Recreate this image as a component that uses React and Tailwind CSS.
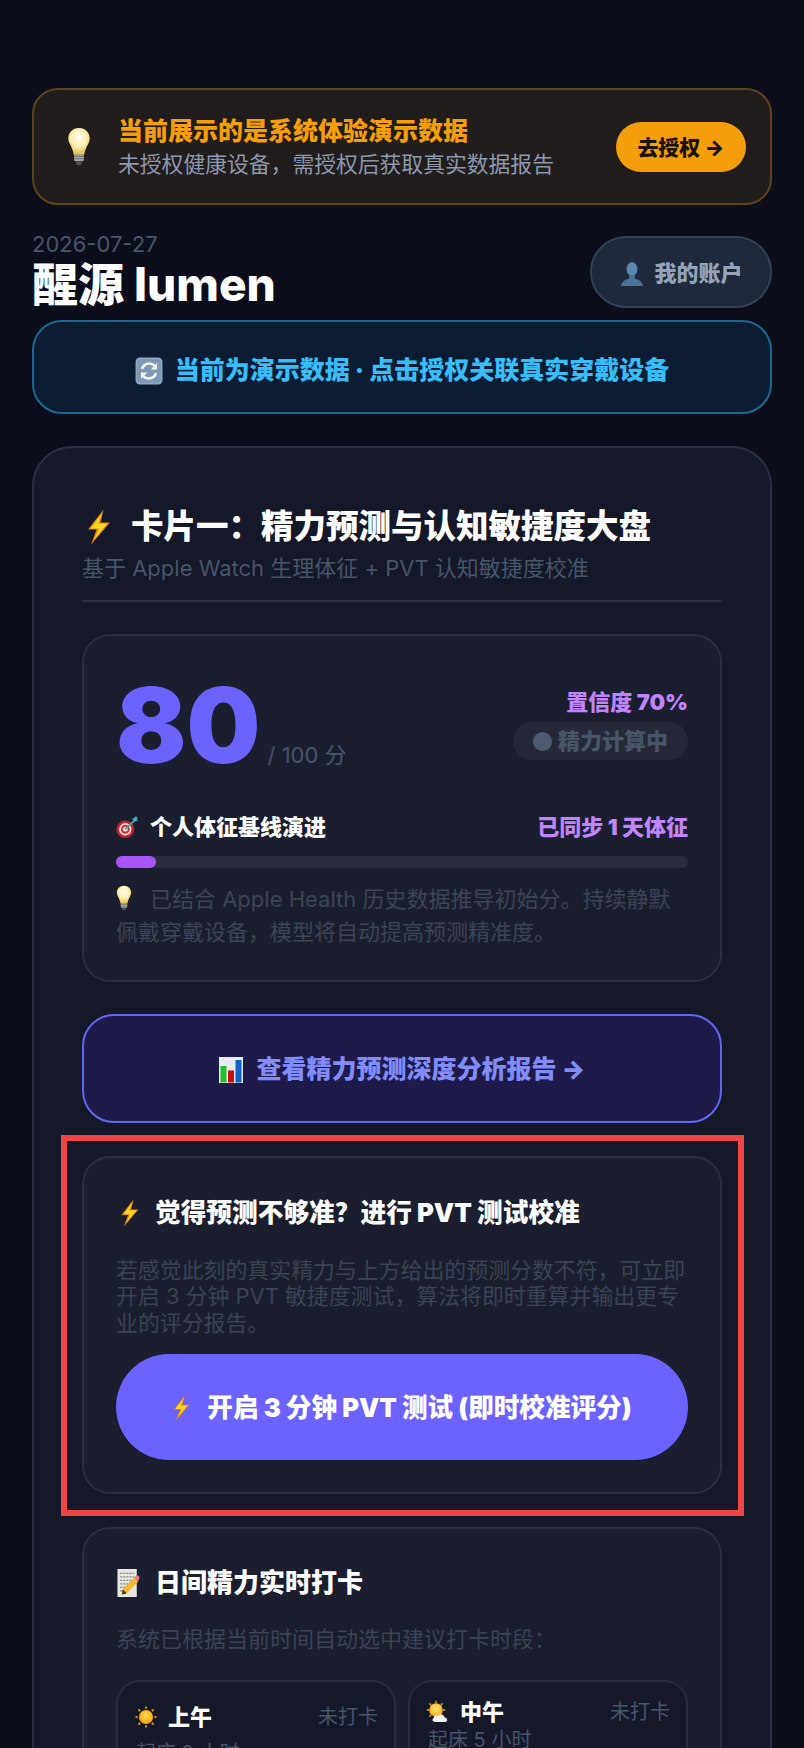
import React from 'react'

const Bulb = ({ className }) => (
  <svg viewBox="0 0 24 40" className={className}>
    <defs>
      <radialGradient id="bulbGlow" cx="50%" cy="35%" r="60%">
        <stop offset="0%" stopColor="#fffdf0" />
        <stop offset="60%" stopColor="#fff0b0" />
        <stop offset="100%" stopColor="#e8c25a" />
      </radialGradient>
    </defs>
    <path d="M12 1C5.5 1 1 5.8 1 11.5c0 5.5 4.6 9 5.6 17h10.8c1-8 5.6-11.5 5.6-17C23 5.8 18.5 1 12 1z" fill="url(#bulbGlow)" />
    <rect x="7" y="28" width="10" height="7" rx="1.5" fill="#a8a8a4" />
    <path d="M7 30h10M7 32.5h10" stroke="#6f6f6c" strokeWidth="1" />
    <rect x="9" y="35" width="6" height="4" rx="2" fill="#55534f" />
  </svg>
)

const Person = ({ className }) => (
  <svg viewBox="0 0 24 24" className={className}>
    <ellipse cx="12" cy="7.5" rx="5" ry="6.5" fill="#5c86ad" />
    <path d="M9.5 13h5l.5 3.5c3.5.8 6.5 2 7 6.5H2c.5-4.500 3.500-5.700 7-6.500z" fill="#4a7299" />
  </svg>
)

const Refresh = ({ className }) => (
  <svg viewBox="0 0 26 26" className={className}>
    <rect x="0.500" y="0.500" width="25" height="25" rx="4" fill="#8fa6bd" />
    <rect x="2" y="2" width="22" height="22" rx="3" fill="#7d99b5" />
    <path d="M6.500 11A7 7 0 0 1 18.500 8.500" fill="none" stroke="#f2f5f8" strokeWidth="2.400" />
    <path d="M20.500 5.500v6h-6z" fill="#f2f5f8" />
    <path d="M19.500 15A7 7 0 0 1 7.500 17.500" fill="none" stroke="#f2f5f8" strokeWidth="2.400" />
    <path d="M5.500 20.500v-6h6z" fill="#f2f5f8" />
  </svg>
)

const Bolt = ({ className }) => (
  <svg viewBox="0 0 24 36" className={className}>
    <path d="M16.500 0.500L1 20.500h8.500L4 35.500 23 13.500h-9.500z" fill="#e08600" />
    <path d="M15.500 3.500L3.500 19.500h8.500L7 31 20.500 14.500h-9.500z" fill="#ffd426" />
  </svg>
)

const Target = ({ className }) => (
  <svg viewBox="0 0 26 26" className={className}>
    <circle cx="10.500" cy="15" r="10" fill="#c9202b" />
    <circle cx="10.500" cy="15" r="7" fill="#f6e4e0" />
    <circle cx="10.500" cy="15" r="5" fill="#d22c33" />
    <circle cx="10.500" cy="15" r="2.800" fill="#f6e4e0" />
    <path d="M10.500 15L21 5" stroke="#3fa9b5" strokeWidth="2" />
    <path d="M18 3l3 3 4-1-1.500-1.500L24.500 1l-3-.5-1 2z" fill="#42b4c4" />
  </svg>
)

const Chart = ({ className }) => (
  <svg viewBox="0 0 24 26" className={className}>
    <rect width="24" height="26" fill="#e6ebf1" />
    <rect x="1.500" y="9" width="6" height="16.500" fill="#1fc22c" />
    <rect x="9" y="13.500" width="6" height="12" fill="#c80f0f" />
    <rect x="16.500" y="3" width="6" height="22.500" fill="#0f62c4" />
  </svg>
)

const Memo = ({ className }) => (
  <svg viewBox="0 0 24 32" className={className}>
    <rect width="22" height="32" fill="#e9e7e2" />
    <path d="M3 5h16M3 9h16M3 13h16M3 17h10M3 21h7M3 25h5" stroke="#8e8c88" strokeWidth="1.300" strokeDasharray="2.500 1" />
    <path d="M6 23L19 10l4.500 4.500L10.500 28 5 29z" fill="#f5b82e" />
    <path d="M19 10l2-2c1-1 2-1 3 0l.5.500c.8.800.8 2 0 3l-1 3z" fill="#e9798a" />
    <path d="M5 29l1-6 4.500 5z" fill="#3d3a36" />
  </svg>
)

const sunRays = [0, 45, 90, 135, 180, 225, 270, 315]

const Sun = ({ className }) => (
  <svg viewBox="0 0 24 24" className={className}>
    <defs>
      <radialGradient id="sunFill" cx="50%" cy="40%" r="60%">
        <stop offset="0%" stopColor="#ffe14d" />
        <stop offset="100%" stopColor="#f79d0c" />
      </radialGradient>
    </defs>
    {sunRays.map((deg) => (
      <path key={deg} d="M12 0.500l1.300 3h-2.600z" fill="#f0a410" transform={`rotate(${deg} 12 12)`} />
    ))}
    <circle cx="12" cy="12" r="7" fill="url(#sunFill)" />
  </svg>
)

const SunCloud = ({ className }) => (
  <svg viewBox="0 0 24 24" className={className}>
    <defs>
      <radialGradient id="sunCloudFill" cx="50%" cy="40%" r="60%">
        <stop offset="0%" stopColor="#ffe97a" />
        <stop offset="100%" stopColor="#f7a90f" />
      </radialGradient>
    </defs>
    {sunRays.map((deg) => (
      <path key={deg} d="M10 0l1.200 2.800H8.800z" fill="#f0a410" transform={`rotate(${deg} 10 10)`} />
    ))}
    <circle cx="10" cy="10" r="6.800" fill="url(#sunCloudFill)" />
    <path d="M9 22c-2.500 0-3.500-3-1.300-4 .2-2.500 3-3.500 4.800-2 1.500-2.500 6-1.500 6 1.500 3-.2 4 4.500.5 4.500z" fill="#f4f5f7" />
  </svg>
)

const Slot = ({ icon, name, wake, className, wakeClass }) => (
  <div className={`rounded-[24px] border-2 border-[#282c3e] bg-[#141829] pl-[18px] pr-[16px] h-[120px] ${className}`}>
    <div className="flex items-center justify-between">
      <div className="flex items-center gap-[10px] text-[22px] font-black leading-[30px] text-white">
        {icon}
        <span>{name}</span>
      </div>
      <span className="text-[20px] leading-[30px] text-[#475569]">未打卡</span>
    </div>
    <div className={`text-[20px] leading-[26px] text-[#475569] ${wakeClass}`}>{wake}</div>
  </div>
)

const App = () => {
  return (
    <div className="h-[1748px] overflow-hidden bg-[#0b0e1a] px-8 pt-[88px] font-[Inter,'Noto_Sans_CJK_SC',sans-serif]">
      <div className="flex h-[117px] items-center rounded-[26px] border-2 border-[#5d431a] bg-[#211d1c] pl-[33px] pr-[24px]">
        <Bulb className="h-[39px] w-[24px] shrink-0" />
        <div className="ml-[27px] flex-1 pt-[2px]">
          <div className="text-[25px] font-black leading-[32px] text-[#f59e0b]">当前展示的是系统体验演示数据</div>
          <div className="mt-[1px] text-[21.800px] leading-[32px] text-[#8d97ae]">未授权健康设备，需授权后获取真实数据报告</div>
        </div>
        <button className="flex h-[50px] w-[130px] items-center justify-center rounded-full bg-[#f59e0b] pt-[2px] text-[21px] font-black text-[#1a1207]">
          去授权 →
        </button>
      </div>

      <div className="mt-[26px] flex items-start justify-between">
        <div>
          <div className="text-[22px] leading-[26px] text-[#475569]">2026-07-27</div>
          <div className="mt-[2px] text-[46px] font-extrabold leading-[50px] text-white">
            <span className="font-black">醒源</span> lumen
          </div>
        </div>
        <button className="mt-[5px] flex h-[72px] w-[182px] items-center justify-center gap-[9px] rounded-[36px] border-2 border-[#334155] bg-[#1e293b] pt-[3px] text-[22px] font-black text-[#94a3b8]">
          <Person className="h-[26px] w-[26px]" />
          我的账户
        </button>
      </div>

      <div className="mt-[11px] flex h-[94px] items-center justify-center gap-[12px] rounded-[30px] border-2 border-[#1b6a91] bg-[#0b1c33] pt-[7px] text-[25px] font-black text-[#38bdf8]">
        <Refresh className="h-[28px] w-[28px]" />
        当前为演示数据 · 点击授权关联真实穿戴设备
      </div>

      <div className="mt-[32px] rounded-[40px] border-2 border-[#2a2e42] bg-[#141829] px-[48px] pt-[59px]">
        <div className="flex items-center gap-[19px] pl-[4px] text-[32.500px] font-black leading-[40px] text-white">
          <Bolt className="h-[36px] w-[26px]" />
          卡片一：精力预测与认知敏捷度大盘
        </div>
        <div className="mt-[6px] text-[22px] leading-[30px] text-[#475569]">基于 Apple Watch 生理体征 + PVT 认知敏捷度校准</div>
        <div className="mt-[17px] h-[2px] bg-[#2a2e42]" />

        <div className="mt-[32px] rounded-[28px] border-2 border-[#2a2e3d] bg-[#1a1e2f] px-[32px] pt-[34px] pb-[31px]">
          <div className="flex items-end justify-between">
            <div className="flex items-end">
              <span className="text-[104px] font-black leading-[110px] text-[#6c63ff]">80</span>
              <span className="mb-[11px] ml-[7px] text-[22px] leading-[28px] text-[#475569]">/ 100 分</span>
            </div>
            <div className="mb-[20px] flex flex-col items-end">
              <span className="text-[22px] font-black leading-[30px] text-[#c084fc]">置信度 70%</span>
              <span className="mt-[5px] flex h-[38px] w-[175px] items-center justify-center gap-[6px] rounded-full bg-[#252937] text-[22px] font-black text-[#475569]">
                <span className="h-[19px] w-[19px] rounded-full bg-[#4d5a70]" />
                精力计算中
              </span>
            </div>
          </div>
          <div className="mt-[32px] flex items-center justify-between">
            <div className="flex items-center gap-[11px] text-[22px] font-black leading-[30px] text-white">
              <Target className="h-[23px] w-[23px]" />
              个人体征基线演进
            </div>
            <span className="text-[22px] font-black leading-[30px] text-[#c084fc]">已同步 1 天体征</span>
          </div>
          <div className="mt-[14px] h-[12px] rounded-full bg-[#2a2d3e]">
            <div className="h-full w-[7%] rounded-full bg-[#a855f7]" />
          </div>
          <p className="mt-[15px] text-[22px] leading-[33px] text-[#3d4454]">
            <Bulb className="mr-[18px] inline-block h-[26px] w-[16px] align-[-4px]" />
            已结合 Apple Health 历史数据推导初始分。持续静默佩戴穿戴设备，模型将自动提高预测精准度。
          </p>
        </div>

        <button className="mt-[32px] flex h-[109px] w-full items-center justify-center gap-[14px] rounded-[32px] border-2 border-[#6366f1] bg-[#1e1b4b] pt-[3px] text-[25px] font-black text-[#818cf8]">
          <Chart className="h-[26px] w-[24px]" />
          查看精力预测深度分析报告 →
        </button>

        <div className="relative mt-[33px] rounded-[28px] border-2 border-[#2a2e3d] bg-[#1a1e2f] px-[32px] pt-[39px] pb-[32px]">
          <div className="pointer-events-none absolute -top-[23px] -right-[24px] -bottom-[24px] -left-[23px] border-[6px] border-[#ef4444]" />
          <div className="flex items-center gap-[14px] pl-[3px] text-[25.700px] font-black leading-[32px] text-white">
            <Bolt className="h-[28px] w-[22px]" />
            觉得预测不够准？进行 PVT 测试校准
          </div>
          <p className="mt-[28px] text-[21.900px] leading-[26.400px] text-[#3b4354]">
            若感觉此刻的真实精力与上方给出的预测分数不符，可立即开启 3 分钟 PVT 敏捷度测试，算法将即时重算并输出更专业的评分报告。
          </p>
          <button className="mt-[18px] flex h-[106px] w-full items-center justify-center gap-[16px] rounded-full bg-[#6c63ff] pt-[2px] text-[25.600px] font-black text-white">
            <Bolt className="h-[26px] w-[19px]" />
            开启 3 分钟 PVT 测试 (即时校准评分)
          </button>
        </div>

        <div className="mt-[33px] rounded-[28px] border-2 border-[#2a2e3d] bg-[#1a1e2f] px-[32px] pt-[38px] pb-[32px]">
          <div className="flex items-center gap-[15px] text-[26px] font-black leading-[32px] text-white">
            <Memo className="h-[28px] w-[24px]" />
            日间精力实时打卡
          </div>
          <p className="mt-[24px] text-[22px] leading-[32px] text-[#3b4354]">系统已根据当前时间自动选中建议打卡时段：</p>
          <div className="mt-[25px] grid grid-cols-2 gap-[12px]">
            <Slot icon={<Sun className="-ml-[2px] h-[24px] w-[24px]" />} name="上午" wake="起床 2 小时" className="pt-[20px]" wakeClass="mt-[8px]" />
            <Slot icon={<SunCloud className="-ml-[2px] h-[24px] w-[24px]" />} name="中午" wake="起床 5 小时" className="pt-[15px]" wakeClass="mt-0" />
          </div>
        </div>
      </div>
    </div>
  )
}

export default App
